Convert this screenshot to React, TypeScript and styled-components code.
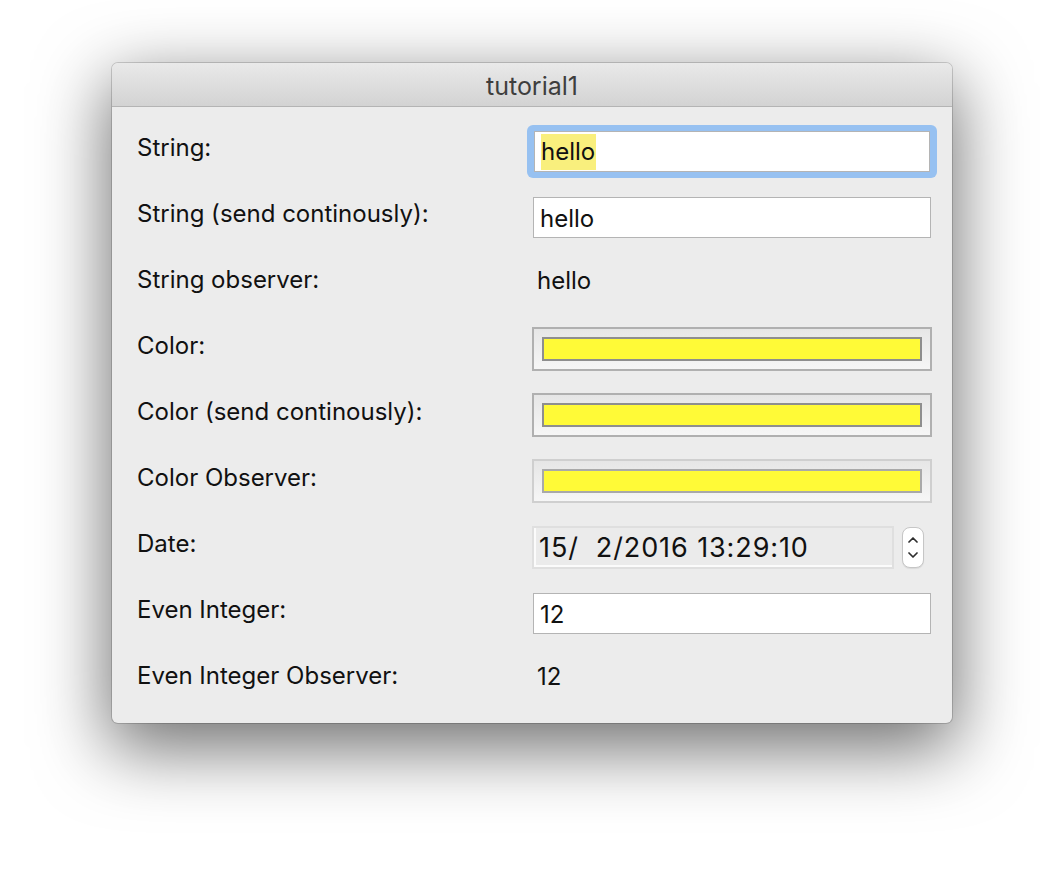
import React from "react";
import styled, { createGlobalStyle } from "styled-components";

const Global = createGlobalStyle`
  html, body { margin: 0; padding: 0; background: #ffffff; }
  body { font-family: Inter, "Liberation Sans", Arial, sans-serif; }
`;

const Page = styled.div`
  width: 1064px;
  height: 884px;
  padding: 63px 0 0 112px;
  box-sizing: border-box;
  background: #ffffff;
`;

const Window = styled.div`
  width: 840px;
  height: 660px;
  border-radius: 6px;
  background: #ececec;
  box-shadow: 0 0 0 1px rgba(0, 0, 0, 0.16), 0 22px 70px 4px rgba(0, 0, 0, 0.56);
  display: flex;
  flex-direction: column;
  overflow: hidden;
`;

const TitleBar = styled.div`
  height: 44px;
  flex: none;
  border-bottom: 1px solid #b4b4b4;
  background: linear-gradient(#e9e9e9, #d3d3d3);
  display: flex;
  align-items: center;
  justify-content: center;
  font-size: 25px;
  color: #3e3e3e;
  padding-top: 2px;
  box-sizing: border-box;
`;

const Form = styled.div`
  display: grid;
  grid-template-columns: 395px 400px;
  grid-auto-rows: 66px;
  align-items: center;
  padding: 11px 20px 11px 25px;
`;

const Label = styled.div`
  font-size: 24px;
  color: #111;
  padding-bottom: 7px;
  white-space: nowrap;
`;

const Value = styled.div`
  font-size: 24px;
  color: #111;
  padding: 0 0 6px 5px;
`;

const TextField = styled.div`
  height: 41px;
  margin: 0 1px;
  box-sizing: border-box;
  border: 1px solid #b4b4b4;
  background: #ffffff;
  display: flex;
  align-items: center;
  padding: 2px 0 0 6px;
  font-size: 24px;
  color: #111;
`;

const FocusRing = styled.div`
  margin: 0 -5px;
  padding: 6px 6px;
  border-radius: 6px;
  background: #97c1f1;
`;

const Selected = styled.span`
  background: #f9ef7d;
  padding: 3px 1px 4px 0;
`;

const Well = styled.div<{ $disabled?: boolean }>`
  height: 44px;
  box-sizing: border-box;
  border: 2px solid ${(p) => (p.$disabled ? "#cfcfcf" : "#b0b0b0")};
  background: linear-gradient(#e6e6e6, #f6f6f6);
  padding: 8px;
`;

const Swatch = styled.div<{ $disabled?: boolean }>`
  height: 24px;
  box-sizing: border-box;
  border: 2px solid ${(p) => (p.$disabled ? "#a9a9a9" : "#8e8e8e")};
  background: #fffa37;
`;

const DateRow = styled.div`
  display: flex;
  align-items: center;
  gap: 8px;
`;

const DateField = styled.div`
  width: 362px;
  height: 43px;
  box-sizing: border-box;
  border: 2px solid #dfdfdf;
  box-shadow: inset 2px -2px 0 #fbfbfb;
  background: #ebebeb;
  display: flex;
  align-items: center;
  padding: 1px 0 0 5px;
  font-size: 27px;
  letter-spacing: 0.9px;
  color: #111;
  white-space: pre;
`;

const Stepper = styled.div`
  width: 22px;
  height: 41px;
  box-sizing: border-box;
  border: 1px solid #c6c6c6;
  border-radius: 8px;
  background: #ffffff;
  box-shadow: 0 1px 1px rgba(0, 0, 0, 0.08);
  display: flex;
  flex-direction: column;
  align-items: center;
  justify-content: center;
  gap: 9px;
`;

const Chevron = ({ up }: { up?: boolean }) => (
  <svg width="10" height="6" viewBox="0 0 10 6">
    <polyline
      points={up ? "1,5 5,1 9,5" : "1,1 5,5 9,1"}
      fill="none"
      stroke="#2e2e2e"
      strokeWidth="1.7"
      strokeLinecap="round"
      strokeLinejoin="round"
    />
  </svg>
);

export default function App() {
  return (
    <>
      <Global />
      <Page>
        <Window>
          <TitleBar>tutorial1</TitleBar>
          <Form>
            <Label>String:</Label>
            <FocusRing>
              <TextField>
                <Selected>hello</Selected>
              </TextField>
            </FocusRing>

            <Label>String (send continously):</Label>
            <TextField>hello</TextField>

            <Label>String observer:</Label>
            <Value>hello</Value>

            <Label>Color:</Label>
            <Well>
              <Swatch />
            </Well>

            <Label>Color (send continously):</Label>
            <Well>
              <Swatch />
            </Well>

            <Label>Color Observer:</Label>
            <Well $disabled>
              <Swatch $disabled />
            </Well>

            <Label>Date:</Label>
            <DateRow>
              <DateField>{"15/  2/2016 13:29:10"}</DateField>
              <Stepper>
                <Chevron up />
                <Chevron />
              </Stepper>
            </DateRow>

            <Label>Even Integer:</Label>
            <TextField>12</TextField>

            <Label>Even Integer Observer:</Label>
            <Value>12</Value>
          </Form>
        </Window>
      </Page>
    </>
  );
}
